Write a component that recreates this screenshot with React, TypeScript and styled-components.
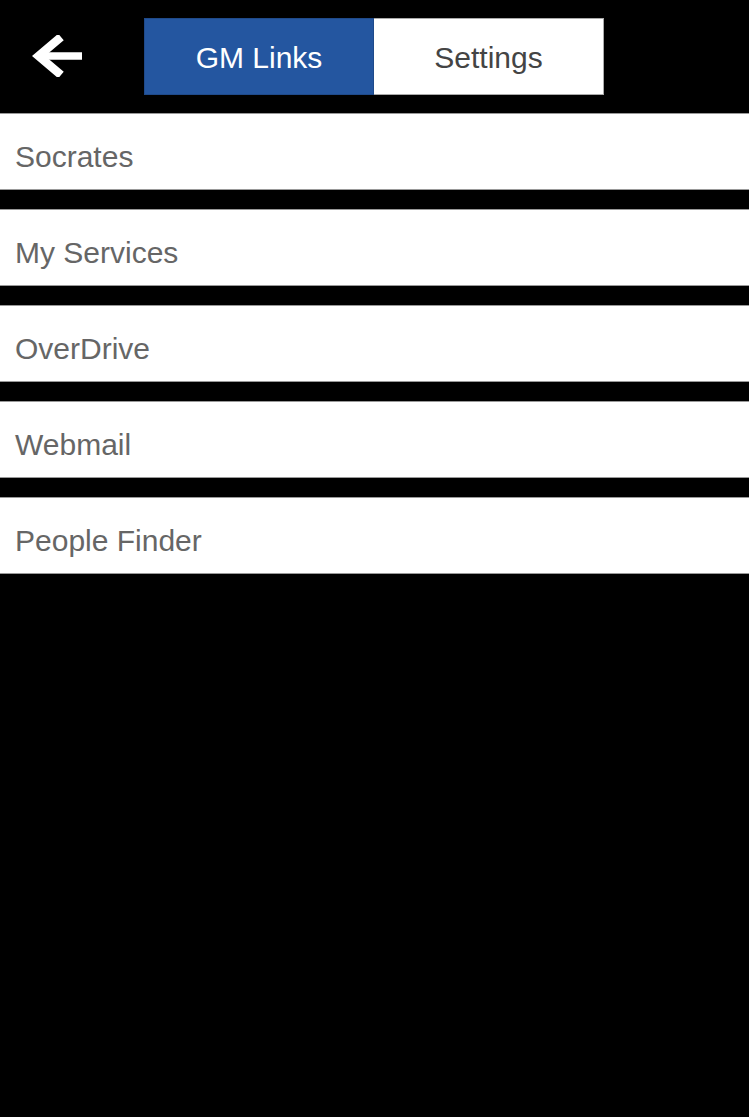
import React, { useState } from 'react';
import styled, { createGlobalStyle } from 'styled-components';

const GlobalStyle = createGlobalStyle`
  html, body {
    margin: 0;
    padding: 0;
    background: #000;
  }
  body {
    font-family: "Liberation Sans", Arial, Helvetica, sans-serif;
  }
`;

const links = ['Socrates', 'My Services', 'OverDrive', 'Webmail', 'People Finder'];

/**
 * GM 링크 화면
 * 상단 탭과 링크 목록
 */
const App: React.FC = () => {
  const [tab, setTab] = useState<'links' | 'settings'>('links');

  return (
    <Page>
      <GlobalStyle />
      <Header>
        <BackButton aria-label="Back">
          <svg width="50" height="42" viewBox="0 0 50 42">
            <path d="M50 21H8" stroke="#fff" strokeWidth="7.5" fill="none" />
            <path d="M29 2L6.5 21L29 40" stroke="#fff" strokeWidth="8.5" fill="none" strokeLinejoin="miter" />
          </svg>
        </BackButton>
        <Tabs>
          <Tab $active={tab === 'links'} onClick={() => setTab('links')}>GM Links</Tab>
          <Tab $active={tab === 'settings'} onClick={() => setTab('settings')}>Settings</Tab>
        </Tabs>
      </Header>

      <List>
        {links.map((name) => (
          <Row key={name}>{name}</Row>
        ))}
      </List>
    </Page>
  );
};

const Page = styled.div`
  min-height: 1117px;
  background: #000;
`;

const Header = styled.div`
  display: flex;
  align-items: flex-start;
  height: 113px;
  box-sizing: border-box;
  padding: 18px 0 0 32px;
`;

const BackButton = styled.button`
  display: flex;
  align-items: center;
  justify-content: center;
  width: 50px;
  height: 76px;
  padding: 0;
  margin-right: 62px;
  background: none;
  border: none;
  cursor: pointer;
`;

const Tabs = styled.div`
  display: flex;
`;

const Tab = styled.button<{ $active: boolean }>`
  width: 230px;
  height: 77px;
  box-sizing: border-box;
  margin: 0;
  padding: 3px 0 0;
  font-family: inherit;
  font-size: 30px;
  cursor: pointer;
  background: ${({ $active }) => ($active ? '#2456a0' : '#fff')};
  color: ${({ $active }) => ($active ? '#fff' : '#444')};
  border: 1px solid ${({ $active }) => ($active ? '#1f4a8a' : '#aaa')};
  border-left-width: ${({ $active }) => ($active ? '1px' : '0')};
`;

const List = styled.div`
  display: flex;
  flex-direction: column;
  gap: 19px;
`;

const Row = styled.div`
  display: flex;
  align-items: center;
  height: 77px;
  box-sizing: border-box;
  padding: 10px 15px 0;
  background: #fff;
  border-top: 1px solid #999;
  border-bottom: 1px solid #999;
  color: #666;
  font-size: 30px;
  cursor: pointer;
`;

export default App;
